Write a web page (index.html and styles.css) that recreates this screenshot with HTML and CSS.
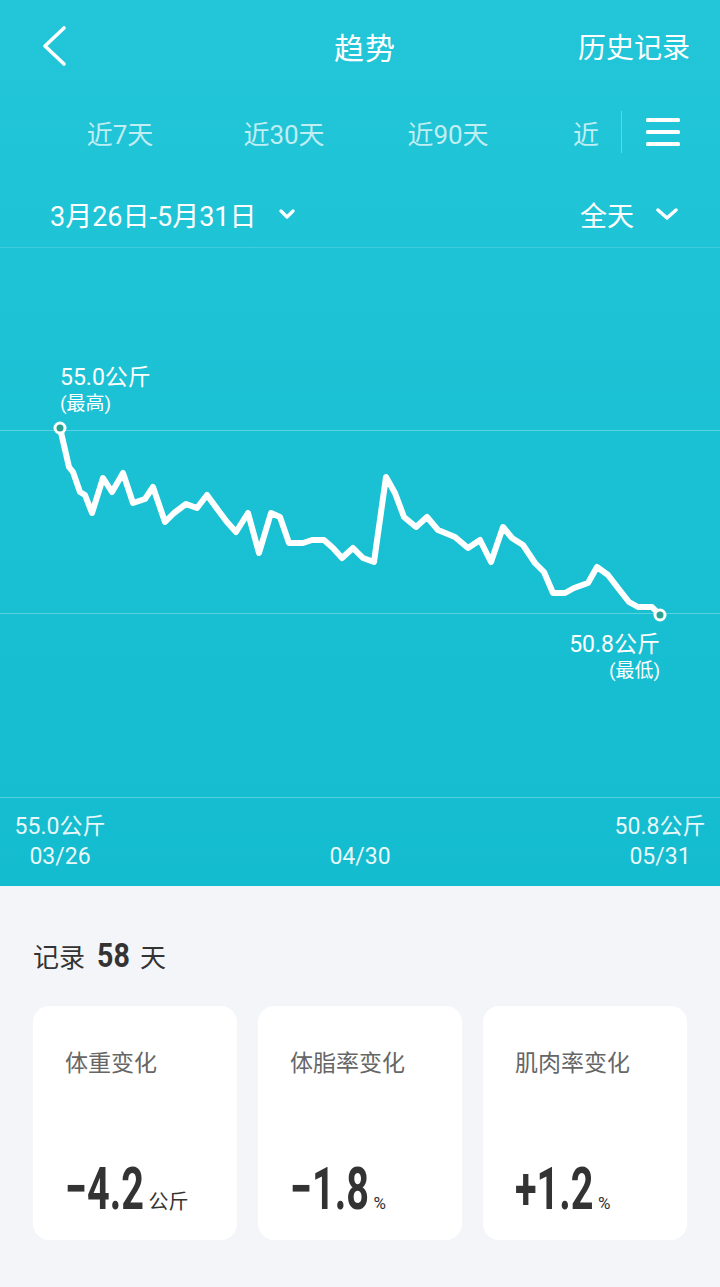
FILE: index.html
```html
<!DOCTYPE html>
<html lang="zh-CN">
<head>
    <meta charset="UTF-8">
    <meta name="viewport" content="width=device-width, initial-scale=1.0">
    <title>趋势</title>
    <link rel="stylesheet" href="styles.css">
</head>
<body>
    <div class="trend">
        <!-- Top bar -->
        <div class="header">
            <div class="back">
                <svg width="30" height="42" viewBox="0 0 30 42">
                    <path d="M24 3 L5 21 L24 39" fill="none" stroke="#fff" stroke-width="3.6" stroke-linecap="round" stroke-linejoin="round"/>
                </svg>
            </div>
            <div class="header-title">趋势</div>
            <div class="header-link">历史记录</div>
        </div>

        <!-- Range tabs -->
        <div class="tabs-row">
            <div class="tabs">
                <div class="tab">近7天</div>
                <div class="tab">近30天</div>
                <div class="tab">近90天</div>
                <div class="tab">近半年</div>
            </div>
            <div class="tabs-divider"></div>
            <div class="menu">
                <svg width="34" height="28" viewBox="0 0 34 28">
                    <rect x="0" y="0" width="34" height="4" rx="1.5" fill="#fff"/>
                    <rect x="0" y="12" width="34" height="4" rx="1.5" fill="#fff"/>
                    <rect x="0" y="24" width="34" height="4" rx="1.5" fill="#fff"/>
                </svg>
            </div>
        </div>

        <!-- Date + time of day pickers -->
        <div class="date-row">
            <div class="picker">
                <span>3月26日-5月31日</span>
                <svg width="16" height="11" viewBox="0 0 16 11">
                    <path d="M2 2 L8 8 L14 2" fill="none" stroke="#fff" stroke-width="3.2" stroke-linecap="round" stroke-linejoin="round"/>
                </svg>
            </div>
            <div class="picker">
                <span>全天</span>
                <svg width="22" height="13" viewBox="0 0 22 13">
                    <path d="M2 2 L11 10 L20 2" fill="none" stroke="#fff" stroke-width="3.4" stroke-linecap="round" stroke-linejoin="round"/>
                </svg>
            </div>
        </div>

        <!-- Weight chart -->
        <div class="chart">
            <svg width="720" height="551" viewBox="0 0 720 551">
                <line x1="0" y1="0.5" x2="720" y2="0.5" class="grid grid-top"/>
                <line x1="0" y1="183.5" x2="720" y2="183.5" class="grid"/>
                <line x1="0" y1="366.5" x2="720" y2="366.5" class="grid"/>
                <line x1="0" y1="550.5" x2="720" y2="550.5" class="grid"/>
                <polyline class="trend-line" points="60,181 69,220 73,225 80,245 85,248 92,266 103,231 112,245 123,226 133,256 145,252 153,240 165,275 174,266 186,257 197,261 207,248 218,263 227,275 236,285 248,266 259,306 271,266 280,270 289,296 303,296 312,293 324,293 333,301 342,311 353,301 363,311 374,315 386,230 395,246 404,270 416,280 427,270 438,283 455,290 468,301 480,293 491,315 503,280 512,291 523,298 535,316 544,325 553,346 565,346 574,341 588,336 597,320 608,328 618,341 629,355 638,360 652,360 660,368"/>
                <circle cx="60" cy="181" r="5" class="dot"/>
                <circle cx="660" cy="368" r="5" class="dot"/>
            </svg>
            <div class="peak-label">
                <div>55.0公斤</div>
                <div class="sub">(最高)</div>
            </div>
            <div class="low-label">
                <div>50.8公斤</div>
                <div class="sub">(最低)</div>
            </div>
        </div>

        <!-- X axis -->
        <div class="axis">
            <div class="axis-item">
                <div>55.0公斤</div>
                <div>03/26</div>
            </div>
            <div class="axis-item axis-mid">
                <div>04/30</div>
            </div>
            <div class="axis-item">
                <div>50.8公斤</div>
                <div>05/31</div>
            </div>
        </div>
    </div>

    <div class="summary">
        <div class="summary-title">
            <span>记录</span>
            <span class="count">58</span>
            <span>天</span>
        </div>

        <div class="cards">
            <div class="card">
                <div class="card-label">体重变化</div>
                <div class="card-value">
                    <span class="num">&minus;4.2</span>
                    <span class="unit">公斤</span>
                </div>
            </div>
            <div class="card">
                <div class="card-label">体脂率变化</div>
                <div class="card-value">
                    <span class="num">&minus;1.8</span>
                    <span class="unit unit-pct">%</span>
                </div>
            </div>
            <div class="card">
                <div class="card-label">肌肉率变化</div>
                <div class="card-value">
                    <span class="num">+1.2</span>
                    <span class="unit unit-pct">%</span>
                </div>
            </div>
        </div>
    </div>
</body>
</html>
```

FILE: styles.css
```css
* {
    box-sizing: border-box;
}

body {
    margin: 0;
    font-family: Roboto, "Noto Sans CJK SC", sans-serif;
    background-color: #f4f5f9;
    color: #333;
}

.trend {
    background: linear-gradient(180deg, #22c6d8 0%, #14bccf 100%);
    color: #fff;
}

/* header */
.header {
    display: grid;
    grid-template-columns: 1fr auto 1fr;
    align-items: center;
    height: 92px;
    padding: 0 30px 0 40px;
}

.back svg {
    display: block;
}

.header-title {
    font-size: 30px;
    letter-spacing: 1px;
}

.header-link {
    justify-self: end;
    font-size: 28px;
}

/* tabs */
.tabs-row {
    display: flex;
    align-items: center;
    height: 80px;
    padding-right: 40px;
}

.tabs {
    flex: 1;
    display: flex;
    overflow: hidden;
    padding-left: 38px;
    white-space: nowrap;
}

.tab {
    flex: 0 0 164px;
    text-align: center;
    font-size: 26px;
    color: rgba(255, 255, 255, 0.72);
}

.tabs-divider {
    width: 1px;
    height: 42px;
    background-color: rgba(255, 255, 255, 0.3);
    margin: 0 24px 0 22px;
}

.menu svg {
    display: block;
}

/* pickers */
.date-row {
    display: flex;
    justify-content: space-between;
    align-items: center;
    height: 75px;
    padding: 10px 42px 0 50px;
    font-size: 27px;
}

.picker {
    display: flex;
    align-items: center;
}

.picker svg {
    margin-left: 22px;
}

/* chart */
.chart {
    position: relative;
    height: 551px;
}

.chart svg {
    display: block;
}

.grid {
    stroke: rgba(255, 255, 255, 0.28);
    stroke-width: 1;
}

.grid-top {
    stroke: rgba(255, 255, 255, 0.15);
}

.trend-line {
    fill: none;
    stroke: #fff;
    stroke-width: 6;
    stroke-linejoin: round;
    stroke-linecap: round;
}

.dot {
    fill: #2ba28e;
    stroke: #fff;
    stroke-width: 3;
}

.peak-label,
.low-label {
    position: absolute;
    font-size: 23px;
    line-height: 26px;
}

.peak-label {
    left: 60px;
    top: 118px;
}

.low-label {
    right: 60px;
    top: 385px;
    text-align: right;
}

.peak-label .sub,
.low-label .sub {
    font-size: 19px;
}

/* axis */
.axis {
    display: flex;
    justify-content: space-between;
    height: 88px;
    padding: 14px 14px 0;
    font-size: 23px;
    line-height: 30px;
    color: rgba(255, 255, 255, 0.92);
}

.axis-item {
    display: flex;
    flex-direction: column;
    align-items: center;
    width: 92px;
}

.axis-mid {
    padding-top: 30px;
}

/* summary */
.summary {
    padding: 49px 33px 0;
}

.summary-title {
    display: flex;
    align-items: baseline;
    font-size: 26px;
    line-height: 40px;
}

.count {
    display: inline-block;
    font-size: 34px;
    font-weight: 700;
    transform: scaleX(0.84);
    transform-origin: left;
    margin: 0 4px 0 12px;
}

.cards {
    display: grid;
    grid-template-columns: repeat(3, 1fr);
    gap: 21px;
    margin-top: 28px;
}

.card {
    display: flex;
    flex-direction: column;
    justify-content: space-between;
    height: 234px;
    padding: 43px 0 28px 32px;
    background-color: #fff;
    border-radius: 16px;
}

.card-label {
    font-size: 23px;
    line-height: 30px;
    color: #666;
}

.card-value {
    display: flex;
    align-items: baseline;
    color: #333;
}

.num {
    display: inline-block;
    font-size: 60px;
    font-weight: 700;
    line-height: 44px;
    transform: scaleX(0.66);
    transform-origin: left;
    margin-right: -36px;
}

.unit {
    font-size: 20px;
    line-height: 1;
}

.unit-pct {
    font-size: 17px;
}
```
